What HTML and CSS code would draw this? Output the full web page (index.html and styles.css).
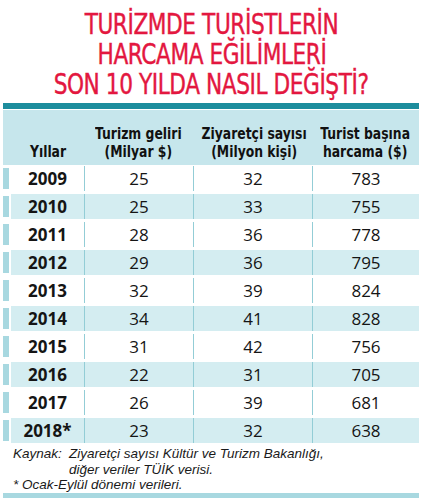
FILE: index.html
```html
<!DOCTYPE html>
<html lang="tr">
<head>
<meta charset="utf-8">
<link rel="stylesheet" href="styles.css">
</head>
<body>
<div class="page">
  <h1 class="title">
    <span class="tline">TURİZMDE TURİSTLERİN</span>
    <span class="tline">HARCAMA EĞİLİMLERİ</span>
    <span class="tline">SON 10 YILDA NASIL DEĞİŞTİ?</span>
  </h1>
  <div class="topbar"></div>
  <div class="table">
    <div class="thead">
      <div class="th th-year"><span class="thtext">Yıllar</span></div>
      <div class="th"><span class="thtext">Turizm geliri<br>(Milyar $)</span></div>
      <div class="th"><span class="thtext">Ziyaretçi sayısı<br>(Milyon kişi)</span></div>
      <div class="th"><span class="thtext">Turist başına<br>harcama ($)</span></div>
    </div>
    <div class="row"><div class="strip"></div><div class="cell year">2009</div><div class="cell sep">25</div><div class="cell sep">32</div><div class="cell sep">783</div></div>
    <div class="row alt"><div class="strip"></div><div class="cell year">2010</div><div class="cell sep">25</div><div class="cell sep">33</div><div class="cell sep">755</div></div>
    <div class="row"><div class="strip"></div><div class="cell year">2011</div><div class="cell sep">28</div><div class="cell sep">36</div><div class="cell sep">778</div></div>
    <div class="row alt"><div class="strip"></div><div class="cell year">2012</div><div class="cell sep">29</div><div class="cell sep">36</div><div class="cell sep">795</div></div>
    <div class="row"><div class="strip"></div><div class="cell year">2013</div><div class="cell sep">32</div><div class="cell sep">39</div><div class="cell sep">824</div></div>
    <div class="row alt"><div class="strip"></div><div class="cell year">2014</div><div class="cell sep">34</div><div class="cell sep">41</div><div class="cell sep">828</div></div>
    <div class="row"><div class="strip"></div><div class="cell year">2015</div><div class="cell sep">31</div><div class="cell sep">42</div><div class="cell sep">756</div></div>
    <div class="row alt"><div class="strip"></div><div class="cell year">2016</div><div class="cell sep">22</div><div class="cell sep">31</div><div class="cell sep">705</div></div>
    <div class="row"><div class="strip"></div><div class="cell year">2017</div><div class="cell sep">26</div><div class="cell sep">39</div><div class="cell sep">681</div></div>
    <div class="row alt"><div class="strip"></div><div class="cell year">2018*</div><div class="cell sep">23</div><div class="cell sep">32</div><div class="cell sep">638</div></div>
  </div>
  <div class="notes">
    <div class="note-src"><span class="note-label">Kaynak:</span><span class="note-text">Ziyaretçi sayısı Kültür ve Turizm Bakanlığı,<br>diğer veriler TÜİK verisi.</span></div>
    <div class="note-line">* Ocak-Eylül dönemi verileri.</div>
  </div>
  <div class="bottombar"></div>
</div>
</body>
</html>
```
FILE: styles.css
```css
html, body {
  margin: 0;
  padding: 0;
  background: #ffffff;
}
.page {
  width: 423px;
  height: 500px;
  overflow: hidden;
  font-family: "Open Sans", "DejaVu Sans", sans-serif;
  color: #1a1a1a;
}
.title {
  margin: 0;
  padding-top: 10px;
  display: flex;
  flex-direction: column;
  align-items: center;
  font-family: "DejaVu Sans Condensed", "DejaVu Sans", sans-serif;
  font-weight: 500;
  font-size: 28px;
  line-height: 30px;
  letter-spacing: -0.5px;
  color: #e3173f;
  -webkit-text-stroke: 0.4px #e3173f;
}
.tline {
  display: block;
  white-space: nowrap;
  transform: scaleX(0.86);
}
.topbar {
  margin: 3px 4px 0 3px;
  height: 6px;
  background: #1d8d9d;
}
.table {
  margin: 1px 4px 0 3px;
}
.thead {
  display: grid;
  grid-template-columns: 81px 109px 119px 1fr;
  height: 55px;
  background: #c6e6ec;
  align-items: end;
  margin-bottom: 1px;
}
.th {
  text-align: center;
  font-family: "DejaVu Sans Condensed", "DejaVu Sans", sans-serif;
  font-weight: bold;
  font-size: 16px;
  line-height: 18px;
  padding-bottom: 4px;
  color: #111111;
  white-space: nowrap;
}
.thtext {
  display: inline-block;
  transform: scaleX(0.86);
}
.th-year {
  padding-left: 10px;
}
.row {
  display: grid;
  grid-template-columns: 8px 73px 109px 119px 1fr;
  height: 25px;
  margin-bottom: 3px;
}
.strip {
  background: #a8d8e0;
  margin: 2px 2px 2px 0;
  width: 6px;
}
.cell {
  display: flex;
  align-items: center;
  justify-content: center;
  font-size: 17px;
  line-height: 25px;
  color: #151515;
}
.row.alt .cell {
  background: #d4edf1;
}
.year {
  font-weight: bold;
}
.sep {
  border-left: 1px solid #93cdd6;
}
.notes {
  margin-top: 0;
  padding-left: 13px;
  font-family: "Liberation Sans", Arial, sans-serif;
  font-style: italic;
  font-size: 13.5px;
  line-height: 15.5px;
  color: #1a1a1a;
}
.note-src {
  display: flex;
}
.note-label {
  width: 56px;
  flex: none;
}
.bottombar {
  margin: 0 4px 0 3px;
  height: 5px;
  background: #a8d8e0;
}
```
